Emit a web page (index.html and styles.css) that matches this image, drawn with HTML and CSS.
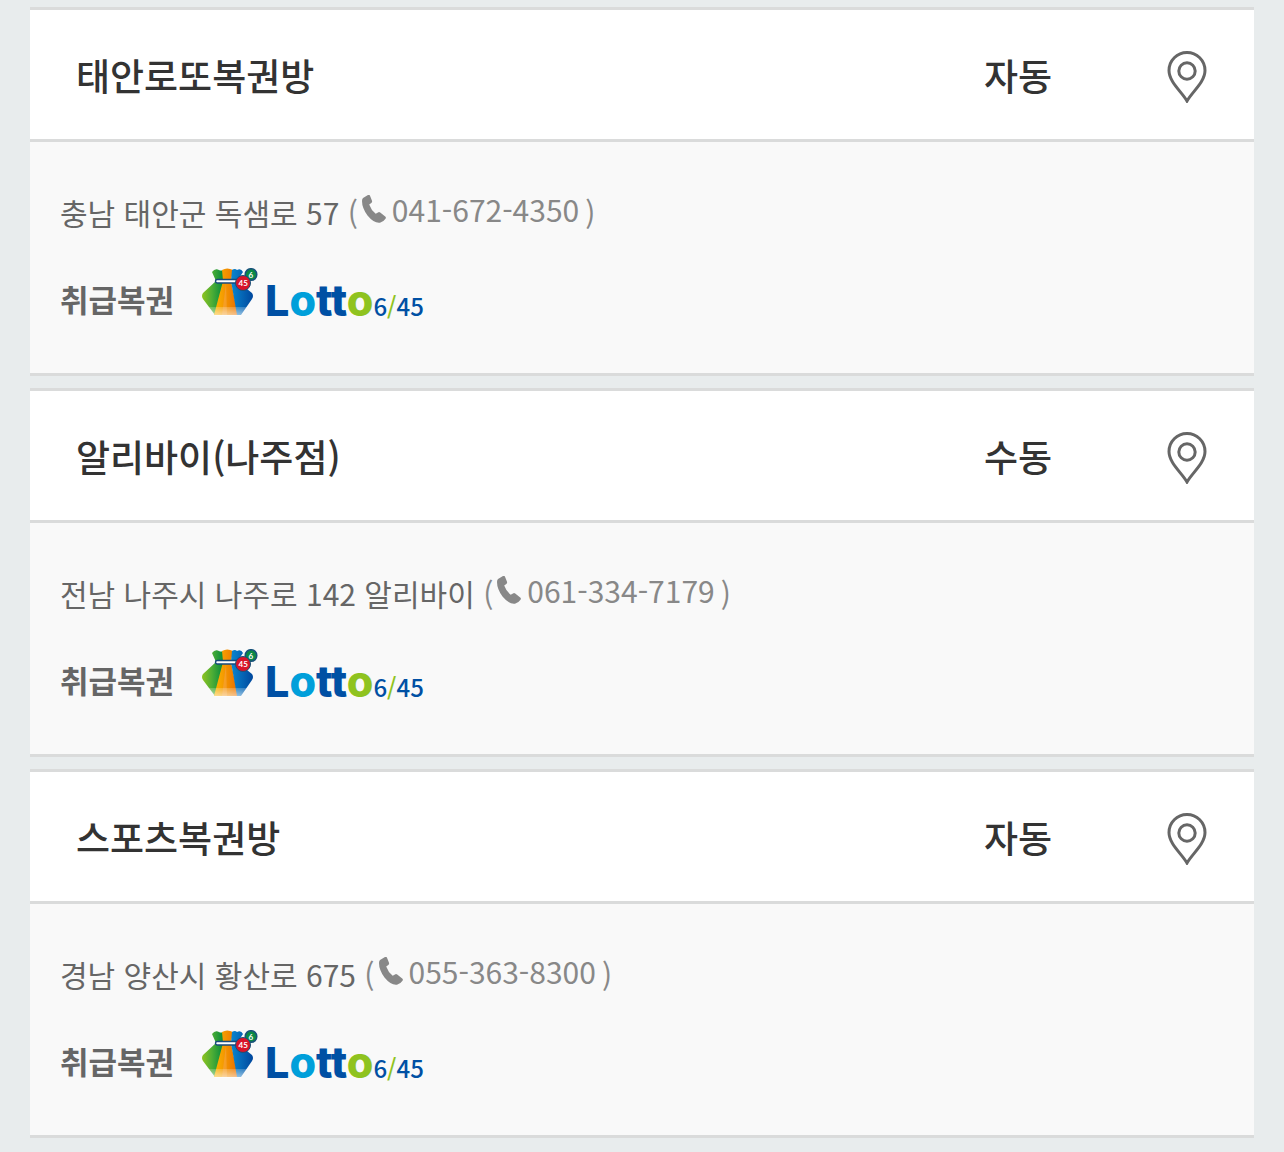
FILE: index.html
```
<!DOCTYPE html>
<html lang="ko">
    <head>
        <meta charset="utf-8">
        <meta name="viewport" content="width=device-width, initial-scale=1.0">
        <title>로또 판매점</title>
        <link rel="stylesheet" href="styles.css">
    </head>
    <body>
        <!-- shared icons -->
        <svg class="sprite" aria-hidden="true">
            <defs>
                <linearGradient id="bag-green">
                    <stop offset="0" stop-color="#8fc31f"/>
                    <stop offset=".45" stop-color="#4fae35"/>
                    <stop offset="1" stop-color="#00883c"/>
                </linearGradient>
                <linearGradient id="bag-orange">
                    <stop offset="0" stop-color="#fbb800"/>
                    <stop offset="1" stop-color="#ea6d00"/>
                </linearGradient>
                <linearGradient id="bag-blue">
                    <stop offset="0" stop-color="#0a86cf"/>
                    <stop offset="1" stop-color="#00479d"/>
                </linearGradient>
                <linearGradient id="bag-fade" x1="0" y1="0" x2="0" y2="1">
                    <stop offset="0" stop-color="#fff" stop-opacity=".2"/>
                    <stop offset="1" stop-color="#fff" stop-opacity=".6"/>
                </linearGradient>
            </defs>
            <symbol id="pin" viewBox="0 0 40 52">
                <path d="M20 50C15 41 2 31 2 19.500a18 18 0 0 1 36 0C38 31 25 41 20 50z"/>
                <circle cx="20" cy="20" r="8.200"/>
            </symbol>
            <symbol id="phone" viewBox="0 0 24 28">
                <path d="M1 3 6 0q1.500-.5 2 .8l2 5q.5 1.500-.7 2.300L7.200 9.600q1.800 5.400 6.500 9.200l2.300-1.400q1.200-.7 2.200.2l5 4q1.200 1 .3 2.100-2.200 3.300-5.500 4Q12 28.500 5.500 20.500 0 13 0 6q0-2 1-3z"/>
            </symbol>
            <symbol id="bag" viewBox="0 0 56 48">
                <path fill="url(#bag-green)" d="M10 4q3-4 7-2 2 1 4 0l1 11-9 34L1 31q-2-3 0-6l13-12z"/>
                <path fill="url(#bag-orange)" d="M20 2q5-3 11 0l-2 11 7 34H12l9-34z"/>
                <path fill="url(#bag-blue)" d="M30 2q3-2 5 0 4-2 6 2l-6 9 15 12q2 3 0 6L39 47h-4l-6-34z"/>
                <path fill="#f7a64b" d="m24 15-4 32h5z" opacity=".5"/>
                <path fill="url(#bag-fade)" d="M6 39h40l-7 9H13z"/>
                <rect x="13.500" y="11.500" width="24" height="3.500" rx="1.700" fill="#fff" stroke="#174a7c" stroke-width="1.500"/>
                <circle cx="49" cy="6.500" r="5.800" fill="#0b8a45" stroke="#17527a" stroke-width="1.500"/>
                <circle cx="41" cy="15" r="7.500" fill="#d7142a" stroke="#17527a"/>
            </symbol>
        </svg>

        <main>
            <ul class="stores">
                <li class="store">
                    <div class="store-head">
                        <h2 class="name">태안로또복권방</h2>
                        <span class="type">자동</span>
                        <button class="map" type="button" aria-label="지도 보기"><svg><use href="#pin"/></svg></button>
                    </div>
                    <div class="store-body">
                        <p class="address">충남 태안군 독샘로 57 <span class="tel">(<a href="tel:041-672-4350"><svg><use href="#phone"/></svg>041-672-4350</a>)</span></p>
                        <div class="lottery">
                            <strong>취급복권</strong>
                            <span class="logo">
                                <svg viewBox="0 0 56 48"><use href="#bag"/><text x="46.500" y="9.500">6</text><text x="36.500" y="18">45</text></svg>
                                <b class="word">L<i class="sky">o</i>tt<i class="lime">o</i></b>
                                <b class="num">6<i class="lime">/</i>45</b>
                            </span>
                        </div>
                    </div>
                </li>
                <li class="store">
                    <div class="store-head">
                        <h2 class="name">알리바이(나주점)</h2>
                        <span class="type">수동</span>
                        <button class="map" type="button" aria-label="지도 보기"><svg><use href="#pin"/></svg></button>
                    </div>
                    <div class="store-body">
                        <p class="address">전남 나주시 나주로 142 알리바이 <span class="tel">(<a href="tel:061-334-7179"><svg><use href="#phone"/></svg>061-334-7179</a>)</span></p>
                        <div class="lottery">
                            <strong>취급복권</strong>
                            <span class="logo">
                                <svg viewBox="0 0 56 48"><use href="#bag"/><text x="46.500" y="9.500">6</text><text x="36.500" y="18">45</text></svg>
                                <b class="word">L<i class="sky">o</i>tt<i class="lime">o</i></b>
                                <b class="num">6<i class="lime">/</i>45</b>
                            </span>
                        </div>
                    </div>
                </li>
                <li class="store">
                    <div class="store-head">
                        <h2 class="name">스포츠복권방</h2>
                        <span class="type">자동</span>
                        <button class="map" type="button" aria-label="지도 보기"><svg><use href="#pin"/></svg></button>
                    </div>
                    <div class="store-body">
                        <p class="address">경남 양산시 황산로 675 <span class="tel">(<a href="tel:055-363-8300"><svg><use href="#phone"/></svg>055-363-8300</a>)</span></p>
                        <div class="lottery">
                            <strong>취급복권</strong>
                            <span class="logo">
                                <svg viewBox="0 0 56 48"><use href="#bag"/><text x="46.500" y="9.500">6</text><text x="36.500" y="18">45</text></svg>
                                <b class="word">L<i class="sky">o</i>tt<i class="lime">o</i></b>
                                <b class="num">6<i class="lime">/</i>45</b>
                            </span>
                        </div>
                    </div>
                </li>
            </ul>
        </main>
    </body>
</html>
```
FILE: styles.css
```
* {
    box-sizing: border-box;
}
body, h2, p, ul {
    margin: 0;
    padding: 0;
}
body {
    background: #e8eced;
    color: #666;
    font-family: "Noto Sans CJK KR", sans-serif;
    font-size: 30px;
    line-height: 48px;
}
.sprite {
    position: absolute;
    width: 0;
    height: 0;
}
main {
    padding: 7px 30px;
}
.stores {
    display: flex;
    flex-direction: column;
    gap: 12px;
    list-style: none;
}
.store {
    border-top: 3px solid #dadbdb;
    border-bottom: 3px solid #dadbdb;
    background: #f9f9f9;
}

/* name, type and map button */
.store-head {
    display: grid;
    grid-template-columns: 1fr 204px 134px;
    align-items: center;
    padding: 37px 0 35px 46px;
    border-bottom: 3px solid #dadbdb;
    background: #fff;
    color: #333;
    line-height: 57px;
}
.name, .type {
    font-size: 37px;
    font-weight: 500;
}
.type {
    text-align: center;
}
.map {
    justify-self: center;
    display: block;
    padding: 2px 0 0;
    border: 0;
    background: none;
    cursor: pointer;
}
.map svg {
    display: block;
    width: 40px;
    height: 52px;
    fill: none;
    stroke: #666;
    stroke-width: 3;
}

/* address and lottery kinds */
.store-body {
    padding: 46px 30px 50px;
}
.tel, .tel a {
    color: #888;
    text-decoration: none;
}
.tel a {
    margin: 0 6px 0 4px;
    line-height: 1;
    vertical-align: 3px;
}
.tel svg {
    width: 24px;
    height: 28px;
    margin-right: 6px;
    fill: #888;
    vertical-align: -1px;
}
.lottery {
    display: flex;
    align-items: flex-start;
    gap: 28px;
    margin-top: 32px;
}
.lottery strong {
    padding-top: 7px;
    font-size: 31px;
}
.logo {
    display: flex;
    align-items: baseline;
    height: 48px;
    color: #0050a4;
}
.logo svg {
    width: 56px;
    height: 48px;
    margin-right: 7px;
}
.logo text {
    fill: #fff;
    font-family: Lato, sans-serif;
    font-size: 8px;
    font-weight: 700;
}
.logo i {
    font-style: normal;
}
.word {
    font-family: Inter, sans-serif;
    font-size: 43px;
    font-weight: 800;
}
.num {
    font-size: 24px;
    font-weight: 500;
}
.logo .sky {
    color: #009fda;
}
.logo .lime {
    color: #8fc31f;
}
```
